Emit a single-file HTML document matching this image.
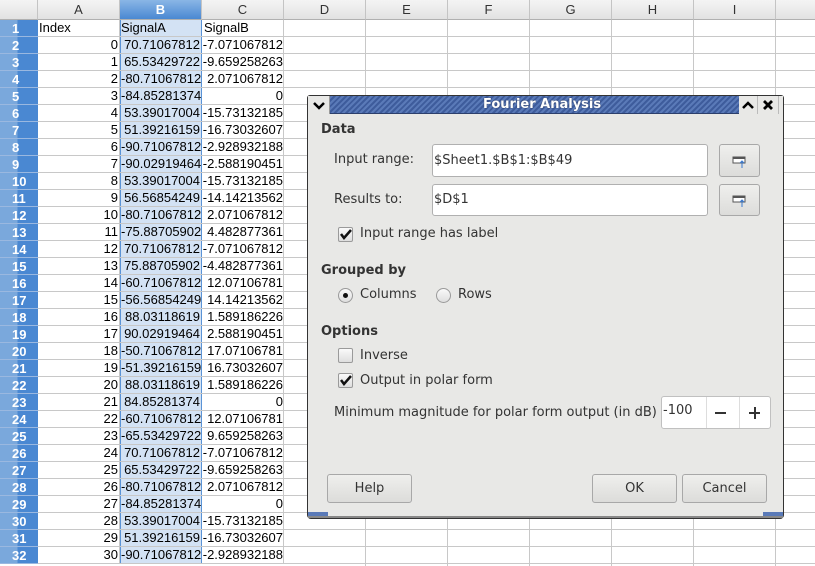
<!DOCTYPE html><html><head><style>
*{margin:0;padding:0;box-sizing:border-box}
html,body{width:815px;height:566px;overflow:hidden}
body{background:#fff;font-family:"Liberation Sans",sans-serif;font-size:13px;position:relative}
.hd{position:absolute;top:0;height:20px;background:linear-gradient(#f4f4f4,#e2e2e2);border-right:1px solid #c4c4c4;border-bottom:1px solid #b0b0b0;text-align:center;line-height:20px;color:#333;font-size:13px}
.rh{position:absolute;left:0;width:38px;height:17px;background:linear-gradient(90deg,#7aa8dc 0,#7aa8dc 17px,#4a88d2 18px);border-bottom:1px solid #9ab8e0;color:#fff;font-weight:bold;font-size:13px;line-height:17px;padding-left:12px}
.row{position:absolute;left:38px;width:777px;height:17px;border-bottom:1px solid #c8c8c8}
.c{position:absolute;top:0;height:16px;line-height:16px;border-right:1px solid #c8c8c8;white-space:nowrap;overflow:hidden;font-size:13px;color:#000}
.a{left:0;width:82px;text-align:right;padding-right:1px}
.b{left:82px;width:82px;text-align:right;padding-right:1px;background:#d3e2f4;border-left:1px solid #5a93d6;border-right:1px solid #5a93d6}
.cc{left:164px;width:82px;text-align:right;padding-right:0}
.gl{position:absolute;top:20px;bottom:0;width:1px;background:#c8c8c8}
#dlg{position:absolute;left:307px;top:95px;width:477px;height:424px;background:#e8e8e6;border:1px solid #333;border-radius:3px 3px 4px 4px;font-family:"DejaVu Sans",sans-serif;font-size:13px;color:#333}
.tb{position:absolute;left:0;top:0;width:431px;height:18px;background:repeating-linear-gradient(135deg,#5a7ab8 0,#5a7ab8 2px,#3e5c9c 2px,#3e5c9c 4px);border-bottom:1px solid #2c3f6c}
.t{position:absolute;font-size:13px;white-space:nowrap}
.bold{font-weight:bold}
.inp{position:absolute;background:#fff;border:1px solid #b0b0b0;border-radius:3px;padding-left:1px;font-size:13px}
.btn{position:absolute;background:linear-gradient(#efefed,#dcdcda);border:1px solid #a8a8a8;border-radius:3px;text-align:center;font-size:13px}
.ck{position:absolute;width:15px;height:15px;border:1px solid #9a9a9a;border-radius:2px;background:linear-gradient(#fafafa,#dedede)}
.rd{position:absolute;width:15px;height:15px;border:1px solid #9a9a9a;border-radius:50%;background:linear-gradient(#fafafa,#dedede)}
</style></head><body>
<div class="hd" style="left:0;width:38px"></div>
<div class="hd" style="left:38px;width:82px">A</div>
<div class="hd" style="left:120px;width:82px;background:linear-gradient(#8ab6e6,#4a88d2);color:#fff;font-weight:bold">B</div>
<div class="hd" style="left:202px;width:82px">C</div>
<div class="hd" style="left:284px;width:82px">D</div>
<div class="hd" style="left:366px;width:82px">E</div>
<div class="hd" style="left:448px;width:82px">F</div>
<div class="hd" style="left:530px;width:82px">G</div>
<div class="hd" style="left:612px;width:82px">H</div>
<div class="hd" style="left:694px;width:82px">I</div>
<div class="hd" style="left:776px;width:40px"></div>
<div class="gl" style="left:365px"></div><div class="gl" style="left:447px"></div><div class="gl" style="left:529px"></div><div class="gl" style="left:611px"></div><div class="gl" style="left:693px"></div><div class="gl" style="left:775px"></div>

<div class="rh" style="top:20px">1</div><div class="row" style="top:20px"><div class="c a" style="text-align:left;padding-left:1px">Index</div><div class="c b" style="text-align:left">SignalA</div><div class="c cc" style="text-align:left;padding-left:2px">SignalB</div></div>
<div class="rh" style="top:37px">2</div><div class="row" style="top:37px"><div class="c a">0</div><div class="c b">70.71067812</div><div class="c cc">-7.071067812</div></div>
<div class="rh" style="top:54px">3</div><div class="row" style="top:54px"><div class="c a">1</div><div class="c b">65.53429722</div><div class="c cc">-9.659258263</div></div>
<div class="rh" style="top:71px">4</div><div class="row" style="top:71px"><div class="c a">2</div><div class="c b">-80.71067812</div><div class="c cc">2.071067812</div></div>
<div class="rh" style="top:88px">5</div><div class="row" style="top:88px"><div class="c a">3</div><div class="c b">-84.85281374</div><div class="c cc">0</div></div>
<div class="rh" style="top:105px">6</div><div class="row" style="top:105px"><div class="c a">4</div><div class="c b">53.39017004</div><div class="c cc">-15.73132185</div></div>
<div class="rh" style="top:122px">7</div><div class="row" style="top:122px"><div class="c a">5</div><div class="c b">51.39216159</div><div class="c cc">-16.73032607</div></div>
<div class="rh" style="top:139px">8</div><div class="row" style="top:139px"><div class="c a">6</div><div class="c b">-90.71067812</div><div class="c cc">-2.928932188</div></div>
<div class="rh" style="top:156px">9</div><div class="row" style="top:156px"><div class="c a">7</div><div class="c b">-90.02919464</div><div class="c cc">-2.588190451</div></div>
<div class="rh" style="top:173px">10</div><div class="row" style="top:173px"><div class="c a">8</div><div class="c b">53.39017004</div><div class="c cc">-15.73132185</div></div>
<div class="rh" style="top:190px">11</div><div class="row" style="top:190px"><div class="c a">9</div><div class="c b">56.56854249</div><div class="c cc">-14.14213562</div></div>
<div class="rh" style="top:207px">12</div><div class="row" style="top:207px"><div class="c a">10</div><div class="c b">-80.71067812</div><div class="c cc">2.071067812</div></div>
<div class="rh" style="top:224px">13</div><div class="row" style="top:224px"><div class="c a">11</div><div class="c b">-75.88705902</div><div class="c cc">4.482877361</div></div>
<div class="rh" style="top:241px">14</div><div class="row" style="top:241px"><div class="c a">12</div><div class="c b">70.71067812</div><div class="c cc">-7.071067812</div></div>
<div class="rh" style="top:258px">15</div><div class="row" style="top:258px"><div class="c a">13</div><div class="c b">75.88705902</div><div class="c cc">-4.482877361</div></div>
<div class="rh" style="top:275px">16</div><div class="row" style="top:275px"><div class="c a">14</div><div class="c b">-60.71067812</div><div class="c cc">12.07106781</div></div>
<div class="rh" style="top:292px">17</div><div class="row" style="top:292px"><div class="c a">15</div><div class="c b">-56.56854249</div><div class="c cc">14.14213562</div></div>
<div class="rh" style="top:309px">18</div><div class="row" style="top:309px"><div class="c a">16</div><div class="c b">88.03118619</div><div class="c cc">1.589186226</div></div>
<div class="rh" style="top:326px">19</div><div class="row" style="top:326px"><div class="c a">17</div><div class="c b">90.02919464</div><div class="c cc">2.588190451</div></div>
<div class="rh" style="top:343px">20</div><div class="row" style="top:343px"><div class="c a">18</div><div class="c b">-50.71067812</div><div class="c cc">17.07106781</div></div>
<div class="rh" style="top:360px">21</div><div class="row" style="top:360px"><div class="c a">19</div><div class="c b">-51.39216159</div><div class="c cc">16.73032607</div></div>
<div class="rh" style="top:377px">22</div><div class="row" style="top:377px"><div class="c a">20</div><div class="c b">88.03118619</div><div class="c cc">1.589186226</div></div>
<div class="rh" style="top:394px">23</div><div class="row" style="top:394px"><div class="c a">21</div><div class="c b">84.85281374</div><div class="c cc">0</div></div>
<div class="rh" style="top:411px">24</div><div class="row" style="top:411px"><div class="c a">22</div><div class="c b">-60.71067812</div><div class="c cc">12.07106781</div></div>
<div class="rh" style="top:428px">25</div><div class="row" style="top:428px"><div class="c a">23</div><div class="c b">-65.53429722</div><div class="c cc">9.659258263</div></div>
<div class="rh" style="top:445px">26</div><div class="row" style="top:445px"><div class="c a">24</div><div class="c b">70.71067812</div><div class="c cc">-7.071067812</div></div>
<div class="rh" style="top:462px">27</div><div class="row" style="top:462px"><div class="c a">25</div><div class="c b">65.53429722</div><div class="c cc">-9.659258263</div></div>
<div class="rh" style="top:479px">28</div><div class="row" style="top:479px"><div class="c a">26</div><div class="c b">-80.71067812</div><div class="c cc">2.071067812</div></div>
<div class="rh" style="top:496px">29</div><div class="row" style="top:496px"><div class="c a">27</div><div class="c b">-84.85281374</div><div class="c cc">0</div></div>
<div class="rh" style="top:513px">30</div><div class="row" style="top:513px"><div class="c a">28</div><div class="c b">53.39017004</div><div class="c cc">-15.73132185</div></div>
<div class="rh" style="top:530px">31</div><div class="row" style="top:530px"><div class="c a">29</div><div class="c b">51.39216159</div><div class="c cc">-16.73032607</div></div>
<div class="rh" style="top:547px">32</div><div class="row" style="top:547px"><div class="c a">30</div><div class="c b">-90.71067812</div><div class="c cc">-2.928932188</div></div>

<div id="dlg">
<div class="tb"></div>
<div style="position:absolute;left:0;top:0;width:22px;height:18px;background:#e8e8e6;border-right:1px solid #999"><svg width="22" height="18"><path d="M6 7l5 5 5-5" stroke="#000" stroke-width="2.5" fill="none"/></svg></div>
<div style="position:absolute;left:431px;top:0;width:44px;height:18px;background:#e8e8e6"><svg width="44" height="18"><path d="M4 12l5-5 5 5" stroke="#000" stroke-width="2.5" fill="none"/><line x1="18.5" y1="0" x2="18.5" y2="18" stroke="#bbb"/><path d="M25 5l8 8M33 5l-8 8" stroke="#000" stroke-width="2.8"/><line x1="39.5" y1="0" x2="39.5" y2="18" stroke="#bbb"/></svg></div>
<div class="t bold" style="left:175px;top:1px;color:#fff;font-size:13px;text-shadow:0 0 1px #223">Fourier Analysis</div>
<div style="position:absolute;left:0;bottom:0;width:20px;height:6px;background:#5a7ab8"></div>
<div style="position:absolute;right:0;bottom:0;width:20px;height:6px;background:#5a7ab8"></div>
<div style="position:absolute;left:0;bottom:0;width:475px;height:2px;background:#888"></div>

<div class="t bold" style="left:13px;top:26px">Data</div>
<div class="t" style="left:26px;top:56px">Input range:</div>
<div class="inp" style="left:124px;top:48px;width:276px;height:33px;line-height:31px">$Sheet1.$B$1:$B$49</div>
<div class="btn" style="left:411px;top:48px;width:41px;height:33px"><svg width="39" height="31"><rect x="13" y="12" width="12" height="6" fill="#fff" stroke="#555"/><rect x="13" y="12" width="12" height="2" fill="#555"/><path d="M22 16v7M20 18l2-2 2 2" stroke="#3a7ad0" fill="none"/></svg></div>
<div class="t" style="left:26px;top:96px">Results to:</div>
<div class="inp" style="left:124px;top:88px;width:276px;height:32px;line-height:30px">$D$1</div>
<div class="btn" style="left:411px;top:88px;width:41px;height:32px"><svg width="39" height="30"><rect x="13" y="11" width="12" height="6" fill="#fff" stroke="#555"/><rect x="13" y="11" width="12" height="2" fill="#555"/><path d="M22 15v7M20 17l2-2 2 2" stroke="#3a7ad0" fill="none"/></svg></div>
<div class="ck" style="left:30px;top:131px"><svg width="13" height="13"><path d="M2 6l3 4 7-8" stroke="#111" stroke-width="2.5" fill="none"/></svg></div>
<div class="t" style="left:52px;top:130px">Input range has label</div>
<div class="t bold" style="left:13px;top:167px">Grouped by</div>
<div class="rd" style="left:30px;top:192px"><div style="position:absolute;left:4px;top:4px;width:5px;height:5px;border-radius:50%;background:#111"></div></div>
<div class="t" style="left:52px;top:191px">Columns</div>
<div class="rd" style="left:128px;top:192px"></div>
<div class="t" style="left:150px;top:191px">Rows</div>
<div class="t bold" style="left:13px;top:228px">Options</div>
<div class="ck" style="left:30px;top:252px"></div>
<div class="t" style="left:52px;top:252px">Inverse</div>
<div class="ck" style="left:30px;top:277px"><svg width="13" height="13"><path d="M2 6l3 4 7-8" stroke="#111" stroke-width="2.5" fill="none"/></svg></div>
<div class="t" style="left:52px;top:277px">Output in polar form</div>
<div class="t" style="left:26px;top:309px">Minimum magnitude for polar form output (in dB)</div>
<div class="inp" style="left:353px;top:300px;width:110px;height:33px;line-height:28px;border-color:#c0c0c0">-100
<div style="position:absolute;left:44px;top:0;width:1px;height:31px;background:#ddd"></div>
<div style="position:absolute;left:77px;top:0;width:1px;height:31px;background:#ddd"></div>
<div style="position:absolute;left:53px;top:15px;width:11px;height:2px;background:#333"></div>
<div style="position:absolute;left:87px;top:15px;width:11px;height:2px;background:#333"></div>
<div style="position:absolute;left:92px;top:10px;width:2px;height:12px;background:#333"></div>
</div>
<div class="btn" style="left:19px;top:378px;width:85px;height:29px;line-height:27px">Help</div>
<div class="btn" style="left:284px;top:378px;width:85px;height:29px;line-height:27px">OK</div>
<div class="btn" style="left:374px;top:378px;width:85px;height:29px;line-height:27px">Cancel</div>
</div>
</body></html>
